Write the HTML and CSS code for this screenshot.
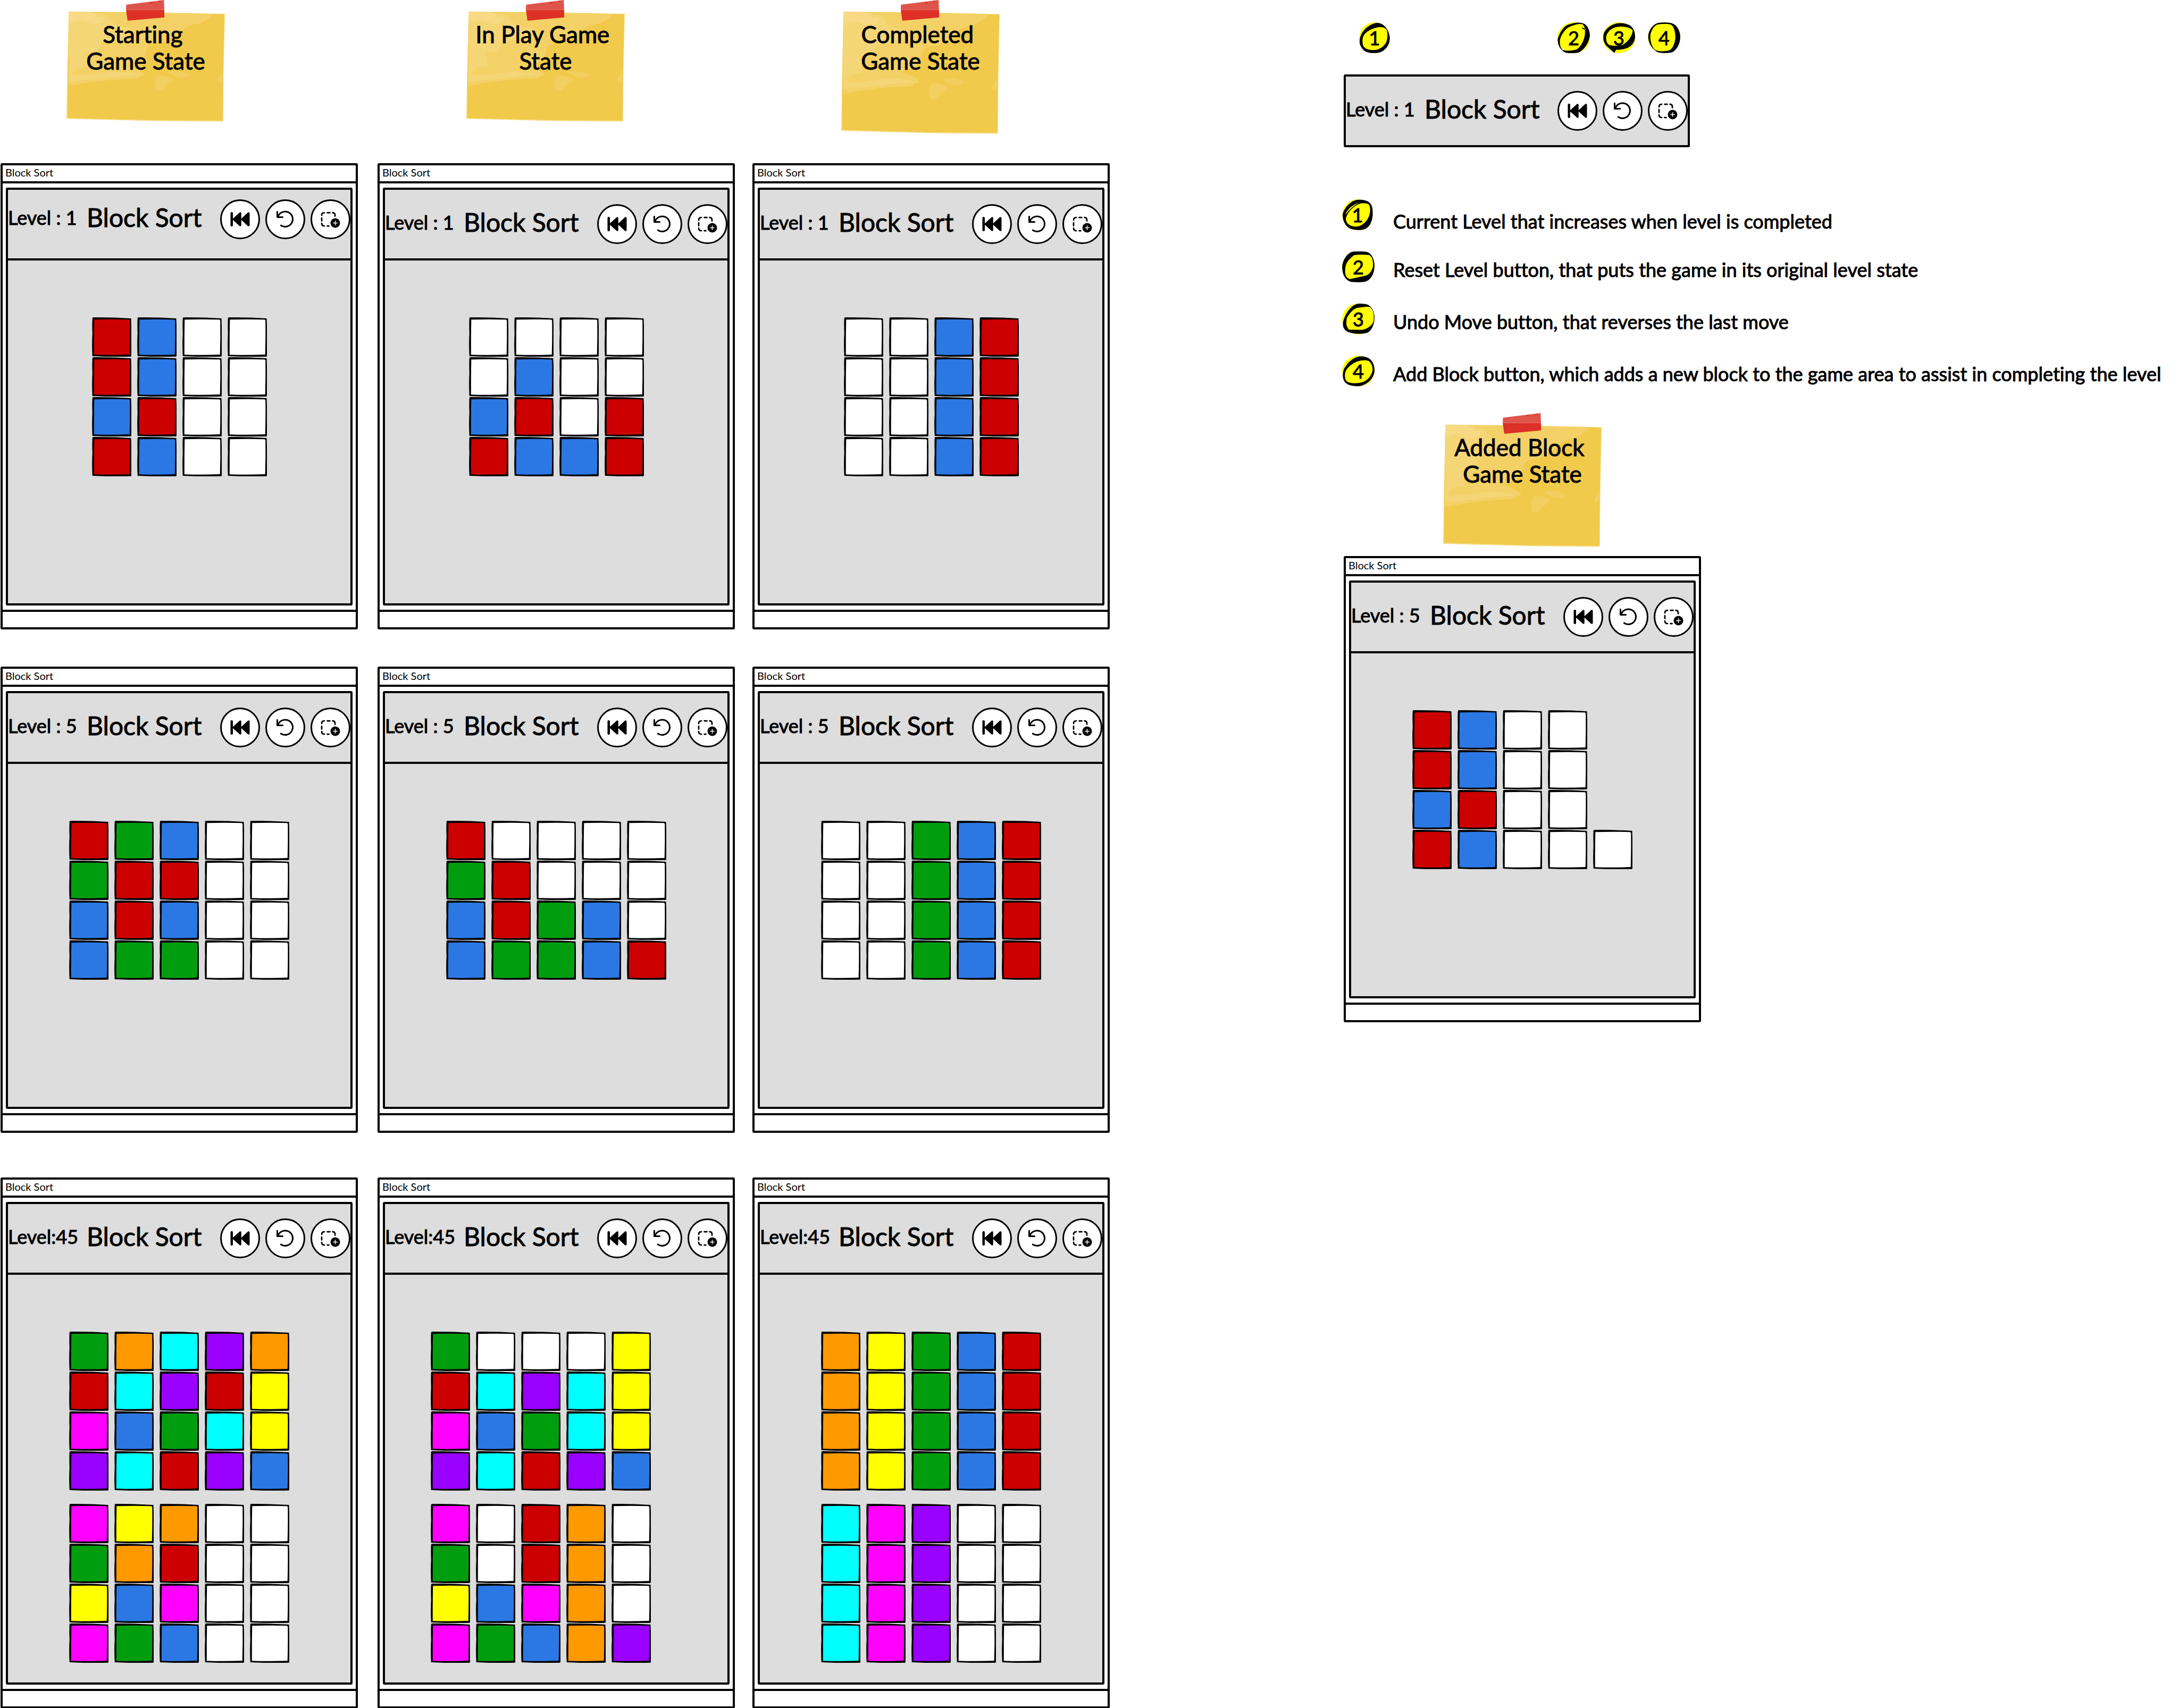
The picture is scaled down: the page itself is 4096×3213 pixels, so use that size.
FILE: index.html
```html
<!DOCTYPE html>
<html lang="en">
<head>
<meta charset="utf-8">
<meta name="viewport" content="width=device-width, initial-scale=1">
<title>Block Sort</title>
<link rel="stylesheet" href="styles.css">
</head>
<body>
<svg class="defs" aria-hidden="true">
  <symbol id="block" viewBox="0 0 293 296" preserveAspectRatio="none">
    <path fill="#000" d="M3 5L8 0Q150-1 291 8Q297 150 293 292Q288 298 275 295Q150 300 3 292Q-2 200 3 120Q0 60 3 5Z"/>
    <path d="M17 17Q150 12 276 17L282 24Q284 150 280 280Q150 286 15 281Q14 150 17 17Z"/>
  </symbol>
  <symbol id="paper" viewBox="50 85 1196 833" preserveAspectRatio="none">
    <path fill="#f7de86" d="M67 88L600 92L1246 105L1236 560L1233 917L700 912L50 896L55 560Z"/>
    <path fill="#f1ca4c" d="M70 91L600 95L1242 108L1232 560L1229 909L700 906L56 890L60 560Z"/>
    <path fill="#f3d166" d="M70 91L1150 105Q1150 130 1110 148Q1080 160 1060 180Q970 185 940 215Q880 270 780 318Q690 320 665 350Q650 380 645 420Q600 480 500 495Q640 540 638 560Q630 580 600 572Q600 590 585 593Q300 600 65 648Z"/>
    <path fill="#f5d676" d="M70 91L235 94Q260 105 340 112Q385 130 385 155Q420 200 560 215L500 300Q310 310 310 330Q305 380 270 390Q180 400 190 410Q220 430 205 480Q240 510 150 508Q90 530 90 565Q110 580 400 543Q560 545 610 568Q400 580 65 616Z"/>
    <path fill="#f7da83" d="M70 91L235 94L275 105Q270 125 285 135Q330 120 345 135Q320 180 265 182Q200 170 160 152Q110 155 70 180Z"/>
    <path fill="#f3cf60" d="M820 540Q900 535 940 548Q980 560 975 570Q940 590 890 580Q830 565 820 540ZM715 610Q720 570 770 573Q840 580 856 604Q830 630 800 645Q770 690 735 686Q708 670 715 610ZM1225 548Q1232 600 1210 618Q1190 618 1191 600Q1195 575 1225 548Z"/>
  </symbol>
  <symbol id="tape" viewBox="502 2 286 154">
    <path fill="#dd3027" d="M502 76H788V132L514 156Z"/>
    <path fill="#df544a" d="M504 36L785 2L788 76H502Z"/>
    <path fill="#dd3027" d="M680 18Q690 13 702 17Q702 27 690 27Q681 27 680 18ZM742 10L760 7Q760 18 750 18Q743 17 742 10Z"/>
  </symbol>
</svg>

<template id="header-template">
  <p class="level"></p>
  <h2 class="game-title">Block Sort</h2>
  <div class="actions">
    <button class="action" type="button" aria-label="Reset level">
      <svg class="icon" viewBox="0 0 300 300"><rect x="78" y="96" width="18" height="108" rx="8"/><path d="M90 150L148 98Q158 94 159 104V145L210 98Q221 94 222 104V196Q221 206 210 202L159 155V196Q158 206 148 202Z"/></svg>
    </button>
    <button class="action" type="button" aria-label="Undo move">
      <svg class="icon icon--line" viewBox="0 0 300 300"><path d="M90 93V134H130M94 134A57 57 0 1 1 117 196"/></svg>
    </button>
    <button class="action" type="button" aria-label="Add block">
      <svg class="icon icon--line icon--dashed" viewBox="0 0 300 300"><path d="M84 120Q84 100 104 100M126 100H146M166 100Q184 100 184 118V126M84 140V162M84 180Q84 200 104 200M126 200H138"/><circle class="solid" cx="186" cy="178" r="36"/><path class="plus" d="M171 178H201M186 163V193"/></svg>
    </button>
  </div>
</template>

<main class="page">
  <section class="states" aria-label="Game states">
    <div class="note"><svg class="note-paper"><use href="#paper"/></svg><svg class="note-tape"><use href="#tape"/></svg><h1 class="note-text">Starting&nbsp;<br>Game State</h1></div>
    <div class="note note--inset"><svg class="note-paper"><use href="#paper"/></svg><svg class="note-tape"><use href="#tape"/></svg><h1 class="note-text">In Play Game&nbsp;<br>State</h1></div>
    <div class="note note--inset note--tall"><svg class="note-paper"><use href="#paper"/></svg><svg class="note-tape"><use href="#tape"/></svg><h1 class="note-text">Completed&nbsp;<br>Game State</h1></div>

    <article class="window window--raised" data-level="Level : 1" data-boards="rrbr bbrb wwww wwww"></article>
    <article class="window" data-level="Level : 1" data-boards="wwbr wbrb wwwb wwrr"></article>
    <article class="window" data-level="Level : 1" data-boards="wwww wwww bbbb rrrr"></article>

    <article class="window" data-level="Level : 5" data-boards="rgbb grrg brbg wwww wwww"></article>
    <article class="window" data-level="Level : 5" data-boards="rgbb wrrg wwgg wwbb wwwr"></article>
    <article class="window" data-level="Level : 5" data-boards="wwww wwww gggg bbbb rrrr"></article>

    <article class="window window--large" data-level="Level:45" data-boards="grmp ocbc cpgr prcp oyyb/mgym yobg ormb wwww wwww"></article>
    <article class="window window--large window--left" data-level="Level:45" data-boards="grmp wcbc wpgr wccp yyyb/mgym wwbg rrmb oooo wwwp"></article>
    <article class="window window--large" data-level="Level:45" data-boards="oooo yyyy gggg bbbb rrrr/cccc mmmm pppp wwww wwww"></article>
  </section>

  <aside class="guide" aria-label="Header guide">
    <div class="callouts">
      <span class="badge badge--one"><svg viewBox="0 0 232 234"><ellipse cx="114" cy="117" rx="114" ry="117"/><path d="M125 5C180-2 225 50 232 115C234 170 200 215 150 230C110 236 70 235 45 220C10 195 0 160 3 140C5 80 60 20 125 5ZM130 40C160 33 190 35 208 55C218 85 215 120 205 150C190 180 160 205 120 210C80 212 50 208 30 180C20 140 22 110 45 85C70 60 100 48 130 40Z"/></svg><span>1</span></span>
      <div class="callout-group">
        <span class="badge"><svg viewBox="0 0 246 234"><ellipse cx="123" cy="117" rx="123" ry="117"/><path d="M130 4C165-2 195 5 210 15C235 35 246 70 246 100C240 160 200 210 160 230C130 236 80 236 60 230C20 210 0 170 2 130C10 90 45 30 80 18ZM75 43C110 25 160 5 190 15C205 30 212 45 208 95C200 150 165 200 140 208C110 216 60 218 40 210C20 190 18 165 18 140C22 105 50 65 75 43ZM184 42L190 39L214 52L210 62Z"/></svg><span>2</span></span>
        <span class="badge"><svg viewBox="0 0 246 234"><ellipse cx="123" cy="117" rx="123" ry="117"/><path d="M100 10C130 2 180 5 210 25C240 50 246 80 246 110C244 160 210 190 170 200C140 210 110 208 105 208C95 215 92 225 90 233L35 185C0 150 2 110 10 80C30 40 65 20 100 10ZM90 40C130 28 170 30 200 42C215 48 228 58 228 65C222 110 190 150 150 172C120 178 80 180 50 172C25 155 22 120 30 95C45 65 65 48 90 40Z"/></svg><span>3</span></span>
        <span class="badge"><svg viewBox="0 0 246 234"><ellipse cx="123" cy="117" rx="123" ry="117"/><path d="M85 3C120-1 150 0 180 6C225 20 246 70 246 110C244 160 230 195 190 225C160 236 100 236 70 225C30 200 0 150 3 105C5 60 40 10 85 3ZM70 17C110 10 150 10 175 17C200 35 208 70 209 115C205 160 190 205 155 215C120 222 80 222 55 210C25 180 15 130 20 90C30 55 45 30 70 17Z"/></svg><span>4</span></span>
      </div>
    </div>

    <div class="toolbar" data-level="Level : 1"></div>

    <ol class="legend">
      <li class="legend-item"><span class="badge badge--one"><svg viewBox="0 0 230 234"><ellipse cx="115" cy="117" rx="115" ry="117"/><path d="M110 4C150 0 185 5 210 28C232 55 230 85 230 115C228 170 205 215 165 228C125 238 80 232 50 218C20 195 5 165 2 125C0 80 60 10 110 4ZM132 33C80 50 30 110 26 150C30 185 60 208 110 207C150 200 185 175 205 120C212 90 215 55 200 38C180 28 150 28 132 33ZM132 21C85 35 30 80 24 118C45 85 80 50 132 21Z"/></svg><span>1</span></span><p class="legend-text">Current Level that increases when level is completed</p></li>
      <li class="legend-item"><span class="badge"><svg viewBox="0 0 246 234"><ellipse cx="123" cy="117" rx="123" ry="117"/><path d="M85 1C130-1 165 0 180 2C225 10 246 60 246 110C244 160 225 215 175 230C130 236 85 234 65 230C20 215-2 170 1 110C5 60 45 5 85 1ZM90 28C130 22 170 24 205 27C230 40 236 70 234 110C230 150 200 180 175 185L60 210C35 205 22 180 23 150C25 110 28 85 60 55Z"/></svg><span>2</span></span><p class="legend-text">Reset Level button, that puts the game in its original level state</p></li>
      <li class="legend-item"><span class="badge"><svg viewBox="0 0 246 234"><ellipse cx="123" cy="117" rx="123" ry="117"/><path d="M115 2C150 0 190 2 205 15C235 35 246 80 246 110C244 165 220 210 190 222C150 234 80 232 45 215C20 205 5 185 6 150C10 110 50 20 115 2ZM115 32C150 30 190 20 210 27C235 45 243 80 240 125C235 165 190 195 150 200L50 198L35 170C30 150 32 130 38 105C55 75 85 40 115 32Z"/></svg><span>3</span></span><p class="legend-text">Undo Move button, that reverses the last move</p></li>
      <li class="legend-item"><span class="badge"><svg viewBox="0 0 246 234"><ellipse cx="123" cy="117" rx="123" ry="117"/><path d="M115 10C150 0 190 10 210 25C240 50 246 85 246 115C242 170 200 210 150 228C100 238 45 230 20 200C0 170 3 130 15 100C35 60 70 25 115 10ZM110 46C150 33 185 33 205 42C225 60 232 85 231 110C225 150 195 190 150 203C110 213 60 213 35 195C18 180 18 140 28 115C45 85 80 58 110 46Z"/></svg><span>4</span></span><p class="legend-text">Add Block button, which adds a new block to the game area to assist in completing the level</p></li>
    </ol>

    <div class="added">
      <div class="note note--centered note--tall"><svg class="note-paper"><use href="#paper"/></svg><svg class="note-tape"><use href="#tape"/></svg><h1 class="note-text">Added Block&nbsp;<br>Game State</h1></div>
      <article class="window" data-level="Level : 5" data-boards="rrbr bbrb wwww wwww w"></article>
    </div>
  </aside>
</main>
<script src="script.js"></script>
</body>
</html>
```
FILE: styles.css
```css
:root {
  --ink: #000;
  --panel: #ddd;
  --line: 4px solid var(--ink);
}

* { box-sizing: border-box; }

body {
  margin: 0;
  background: #fff;
  color: var(--ink);
  font-family: Lato, "Open Sans", sans-serif;
  font-variant-ligatures: none;
}

h1, h2, p, ol { margin: 0; padding: 0; font-weight: 400; }

.defs { display: none; }

/* Page: nine game states on the left, the header guide on the right */
.page {
  display: grid;
  grid-template-columns: minmax(0, 2523fr) minmax(0, 1572fr);
  padding-left: 1px;
}

.states {
  display: grid;
  grid-template-columns: minmax(0, 709fr) minmax(0, 705fr) minmax(0, 1109fr);
  align-items: start;
}

/* Sticky notes */
.note {
  position: relative;
  width: 298px;
  height: 229px;
  margin: 0 0 78px 124px;
  padding-top: 39px;
}
.note--inset { margin-left: 167px; }
.note--tall { height: 252px; margin-bottom: 55px; }
.note--centered { margin: 0 auto 17px; }
.note-paper {
  position: absolute;
  inset: 21px 0 0;
  width: 100%;
  height: calc(100% - 21px);
}
.note-tape {
  position: absolute;
  top: 0;
  left: 112px;
  width: 72px;
  height: 39px;
}
.note-text {
  position: relative;
  font-size: 44px;
  line-height: 50px;
  text-align: center;
  white-space: nowrap;
  -webkit-text-stroke: 1px var(--ink);
}

/* Game window */
.window {
  width: 672px;
  margin-bottom: 70px;
  border: var(--line);
  border-radius: 3px;
  background: #fff;
}
.states .window:nth-last-child(-n+6) { margin-bottom: 84px; }
.states .window--large:nth-last-child(-n+3) { margin-bottom: 0; }
.window-title {
  height: 34px;
  padding-left: 5px;
  border-bottom: var(--line);
  font-size: 20px;
  line-height: 26px;
}
.window-foot {
  height: 33px;
  border-top: var(--line);
}
.screen {
  margin: 8px 6px;
  border: var(--line);
  border-radius: 3px;
  background: var(--panel);
}

.screen-header,
.toolbar {
  display: grid;
  grid-template-columns: 148px minmax(0, 1fr) auto;
  align-items: center;
}
.screen-header {
  height: 133px;
  border-bottom: var(--line);
}
.window--raised .screen-header { padding-bottom: 18px; }

.level {
  padding-bottom: 8px;
  font-size: 36px;
  line-height: 44px;
  white-space: nowrap;
  -webkit-text-stroke: 1px var(--ink);
}
.game-title {
  padding-bottom: 8px;
  font-size: 48px;
  line-height: 58px;
  white-space: nowrap;
  -webkit-text-stroke: 1px var(--ink);
}
.actions { display: flex; gap: 10px; }
.action {
  width: 75px;
  height: 75px;
  padding: 0;
  border: 3px solid var(--ink);
  border-radius: 50%;
  background: #fff;
}
.icon { display: block; width: 75px; height: 75px; margin: -3px; }
.icon--line { fill: none; stroke: var(--ink); stroke-width: 12; stroke-linecap: round; stroke-linejoin: round; }
.icon--dashed { stroke-width: 11; }
.icon .solid { fill: var(--ink); stroke: none; }
.icon .plus { stroke: #fff; stroke-width: 6; }

/* Play area */
.stage {
  display: grid;
  justify-content: center;
  align-content: start;
  gap: 25px;
  min-height: 645px;
  padding: 107px 0 37px;
}
.window--left .stage { padding-right: 58px; }
.board { display: flex; align-items: flex-end; gap: 11px; }
.stack { display: grid; gap: 1px; }
.block { display: block; width: 74px; height: 74px; }
.block--r { fill: #c00; }
.block--b { fill: #2b78e4; }
.block--g { fill: #009e0f; }
.block--w { fill: #fff; }
.block--o { fill: #f90; }
.block--c { fill: #0ff; }
.block--p { fill: #90f; }
.block--y { fill: #ff0; }
.block--m { fill: #f0f; }

/* Header guide */
.guide { padding-top: 42px; }
.callouts {
  display: flex;
  justify-content: space-between;
  width: 636px;
  padding-left: 32px;
}
.callout-group { display: flex; gap: 24px; }
.badge {
  display: grid;
  place-items: center;
  width: 61px;
  height: 58px;
  font-size: 36px;
  line-height: 44px;
  -webkit-text-stroke: 1px var(--ink);
}
.badge--one { width: 58px; }
.badge > * { grid-area: 1 / 1; }
.badge svg { display: block; width: 100%; height: 100%; fill-rule: evenodd; }
.badge ellipse { fill: #ff0; }

.toolbar {
  width: 651px;
  height: 137px;
  margin: 40px 0 98px 3px;
  border: var(--line);
  border-radius: 3px;
  background: var(--panel);
}

.legend { display: grid; gap: 40px; list-style: none; }
.legend-item {
  display: grid;
  grid-template-columns: 61px minmax(0, 1fr);
  column-gap: 35px;
  align-items: end;
  height: 58px;
}
.legend-text {
  font-size: 36px;
  line-height: 48px;
  white-space: nowrap;
  -webkit-text-stroke: 1px var(--ink);
}
.legend-item:first-child .legend-text { line-height: 34px; }

.added { width: 672px; margin: 50px 0 0 3px; }
.added .window { margin: 0; }
```
FILE: script.js
```js
const headerTemplate = document.getElementById('header-template');

function fillHeader(target, level) {
  target.append(headerTemplate.content.cloneNode(true));
  target.querySelector('.level').textContent = level;
}

// A board is a list of stacks; each letter is the colour of one block, top first.
function boardMarkup(board) {
  const stacks = board.split(' ').map((stack) =>
    '<div class="stack">' +
    [...stack].map((c) => `<svg class="block block--${c}"><use href="#block"/></svg>`).join('') +
    '</div>');
  return `<div class="board">${stacks.join('')}</div>`;
}

document.querySelectorAll('.window').forEach((win) => {
  win.innerHTML =
    '<p class="window-title">Block Sort</p>' +
    '<div class="screen"><header class="screen-header"></header>' +
    `<div class="stage">${win.dataset.boards.split('/').map(boardMarkup).join('')}</div></div>` +
    '<div class="window-foot"></div>';
  fillHeader(win.querySelector('.screen-header'), win.dataset.level);
});

document.querySelectorAll('.toolbar').forEach((bar) => fillHeader(bar, bar.dataset.level));
```
